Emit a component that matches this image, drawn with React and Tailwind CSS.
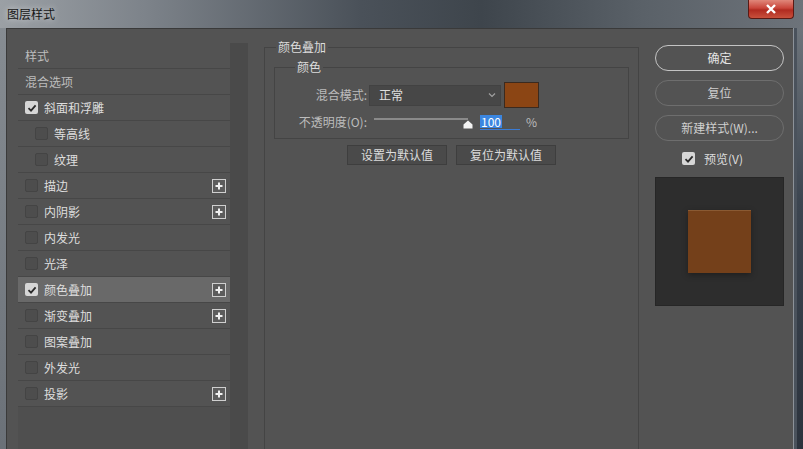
import React from "react";

const font = { fontFamily: '"Noto Sans CJK SC", "Noto Sans", sans-serif' };

function Check({ checked }) {
  if (checked) {
    return (
      <div className="w-[13px] h-[13px] rounded-[2px] bg-[#d6d6d6] flex items-center justify-center shrink-0">
        <svg width="10" height="10" viewBox="0 0 10 10">
          <path d="M1.5 5.2 L4 7.6 L8.6 2.4" fill="none" stroke="#2a2a2a" strokeWidth="1.8" />
        </svg>
      </div>
    );
  }
  return <div className="w-[13px] h-[13px] rounded-[2px] border border-[#444] bg-[#4d4d4d] shrink-0" />;
}

function Plus() {
  return (
    <div className="w-[14px] h-[14px] border border-[#cfcfcf] bg-[#5c5c5c] flex items-center justify-center">
      <svg width="10" height="10" viewBox="0 0 10 10">
        <path d="M5 1.5 V8.5 M1.5 5 H8.5" stroke="#f0f0f0" strokeWidth="2" />
      </svg>
    </div>
  );
}

const items = [
  { label: "样式", kind: "plain" },
  { label: "混合选项", kind: "plain" },
  { label: "斜面和浮雕", checked: true },
  { label: "等高线", indent: true },
  { label: "纹理", indent: true },
  { label: "描边", plus: true },
  { label: "内阴影", plus: true },
  { label: "内发光" },
  { label: "光泽" },
  { label: "颜色叠加", checked: true, plus: true, selected: true },
  { label: "渐变叠加", plus: true },
  { label: "图案叠加" },
  { label: "外发光" },
  { label: "投影", plus: true },
];

export default function App() {
  return (
    <div
      className="w-[803px] h-[449px] overflow-hidden flex flex-col bg-[linear-gradient(90deg,#9ba0a5_0%,#7d838a_18%,#4a5159_45%,#3e454c_60%,#5a6168_80%,#6d737a_100%)] text-[12px]"
      style={font}
    >
      {/* title bar */}
      <div className="h-[28px] shrink-0 flex items-start justify-between">
        <div className="pl-[7px] pt-[5px] text-[12px] leading-[18px] text-[#151515] [text-shadow:0_0_6px_rgba(255,255,255,0.7)]">
          图层样式
        </div>
        <div className="mr-[9px] w-[46px] h-[19px] rounded-b-[4px] border border-[#5a1a14] border-t-0 bg-[linear-gradient(180deg,#e0877a_0%,#c9453a_45%,#b12b20_55%,#c8503c_100%)] flex items-center justify-center">
          <svg width="12" height="10" viewBox="0 0 12 10">
            <path d="M2 1 L10 9 M10 1 L2 9" stroke="#ffffff" strokeWidth="2.4" />
          </svg>
        </div>
      </div>

      {/* window body */}
      <div className="flex-1 flex">
        <div className="w-[6px] bg-[linear-gradient(180deg,#868c92_0%,#6a7077_100%)]" />
        <div className="flex-1 flex border-l border-t border-[#3a3a3a] bg-[#535353]">
          {/* left list */}
          <div className="pl-[11px] pt-[14px] flex">
            <div className="flex w-[230px] bg-[#4f4f4f]">
              <div className="w-[212px] flex flex-col">
                {items.map((it, i) => (
                  <div
                    key={i}
                    className={
                      "h-[26px] shrink-0 flex items-center border-b border-[#474747] pr-[4px] " +
                      (it.selected ? "bg-[#696969] " : "bg-[#535353] ") +
                      (it.kind === "plain" ? "pl-[7px]" : it.indent ? "pl-[17px]" : "pl-[7px]")
                    }
                  >
                    {it.kind !== "plain" && <Check checked={it.checked} />}
                    <span
                      className={
                        (it.kind === "plain" ? "text-[#bdbdbd]" : "ml-[6px] text-[#dedede]") + " flex-1 leading-none"
                      }
                    >
                      {it.label}
                    </span>
                    {it.plus && <Plus />}
                  </div>
                ))}
              </div>
              <div className="w-[18px] bg-[#4a4a4a]" />
            </div>
          </div>

          {/* middle group */}
          <div className="pl-[16px] pt-[11px]">
            <fieldset className="w-[375px] h-[420px] border border-[#444] border-b-0 px-[9px]">
              <legend className="ml-[2px] px-[2px] text-[#dcdcdc] leading-[14px]">颜色叠加</legend>
              <fieldset className="border border-[#444] pl-[10px] pr-[10px] pb-[5px] mt-[6px]">
                <legend className="ml-[10px] px-[2px] text-[#dcdcdc] leading-[14px]">颜色</legend>
                <div className="flex items-center h-[28px] mt-[7px]">
                  <div className="w-[82px] text-right text-[#bcbcbc]">混合模式:</div>
                  <div className="ml-[2px] w-[132px] h-[21px] bg-[#474747] border border-[#424242] flex items-center pl-[9px] pr-[4px] text-[#e0e0e0]">
                    <span className="flex-1">正常</span>
                    <svg width="8" height="6" viewBox="0 0 8 6">
                      <path d="M1 1.5 L4 4.5 L7 1.5" fill="none" stroke="#a0a0a0" strokeWidth="1.2" />
                    </svg>
                  </div>
                  <div className="ml-[3px] w-[35px] h-[26px] bg-[#8b4514] border border-[#3b2a1f]" />
                </div>
                <div className="flex items-center h-[23px] mt-[1px]">
                  <div className="w-[82px] text-right text-[#bcbcbc] whitespace-nowrap">不透明度(O):</div>
                  <div className="ml-[7px] relative w-[100px] h-[16px]">
                    <div className="mt-[4px] w-[94px] h-[2px] bg-[#8a8a8a]" />
                    <svg className="absolute left-[89px] top-[6px]" width="10" height="9" viewBox="0 0 10 9">
                      <path d="M5 0.5 L9.5 4.5 V8.5 H0.5 V4.5 Z" fill="#f2f2f2" />
                    </svg>
                  </div>
                  <div className="ml-[6px] w-[40px] h-[17px] border-b border-[#3a7bd5] flex items-center">
                    <span className="bg-[#3b86e0] text-white leading-[13px] px-[1px]">100</span>
                  </div>
                  <span className="ml-[6px] text-[#bcbcbc]">%</span>
                </div>
              </fieldset>
              <div className="flex justify-center gap-[9px] mt-[6px]">
                <div className="w-[100px] h-[20px] bg-[#4a4a4a] border border-[#3e3e3e] flex items-center justify-center text-[#dcdcdc]">
                  设置为默认值
                </div>
                <div className="w-[100px] h-[20px] bg-[#4a4a4a] border border-[#3e3e3e] flex items-center justify-center text-[#dcdcdc]">
                  复位为默认值
                </div>
              </div>
            </fieldset>
          </div>

          {/* right column */}
          <div className="pl-[16px] pt-[16px] flex flex-col">
            <div className="w-[129px] h-[26px] rounded-full border-[1.5px] border-[#c4c4c4] flex items-center justify-center text-[#e4e4e4]">
              确定
            </div>
            <div className="mt-[9px] w-[129px] h-[26px] rounded-full border-[1.5px] border-[#6e6e6e] flex items-center justify-center text-[#cfcfcf]">
              复位
            </div>
            <div className="mt-[9px] w-[129px] h-[26px] rounded-full border-[1.5px] border-[#6e6e6e] flex items-center justify-center text-[#cfcfcf]">
              新建样式(W)...
            </div>
            <div className="mt-[10px] flex items-center pl-[27px] h-[15px]">
              <Check checked />
              <span className="ml-[9px] text-[#dcdcdc]">预览(V)</span>
            </div>
            <div className="mt-[11px] w-[129px] h-[129px] bg-[#2d2d2d] border border-[#262626] flex items-center justify-center">
              <div className="w-[63px] h-[63px] bg-[#74401a] border-t border-[#8a5a33] shadow-[0_2px_6px_rgba(0,0,0,0.35)]" />
            </div>
          </div>
          <div className="flex-1" />
        </div>
        <div className="w-[10px] flex border-l border-[#8c9299] bg-[linear-gradient(180deg,#6d747b_0%,#3c4550_40%,#2b323c_100%)]">
          <div className="w-[3px] bg-[#4a525c]" />
        </div>
      </div>
    </div>
  );
}
